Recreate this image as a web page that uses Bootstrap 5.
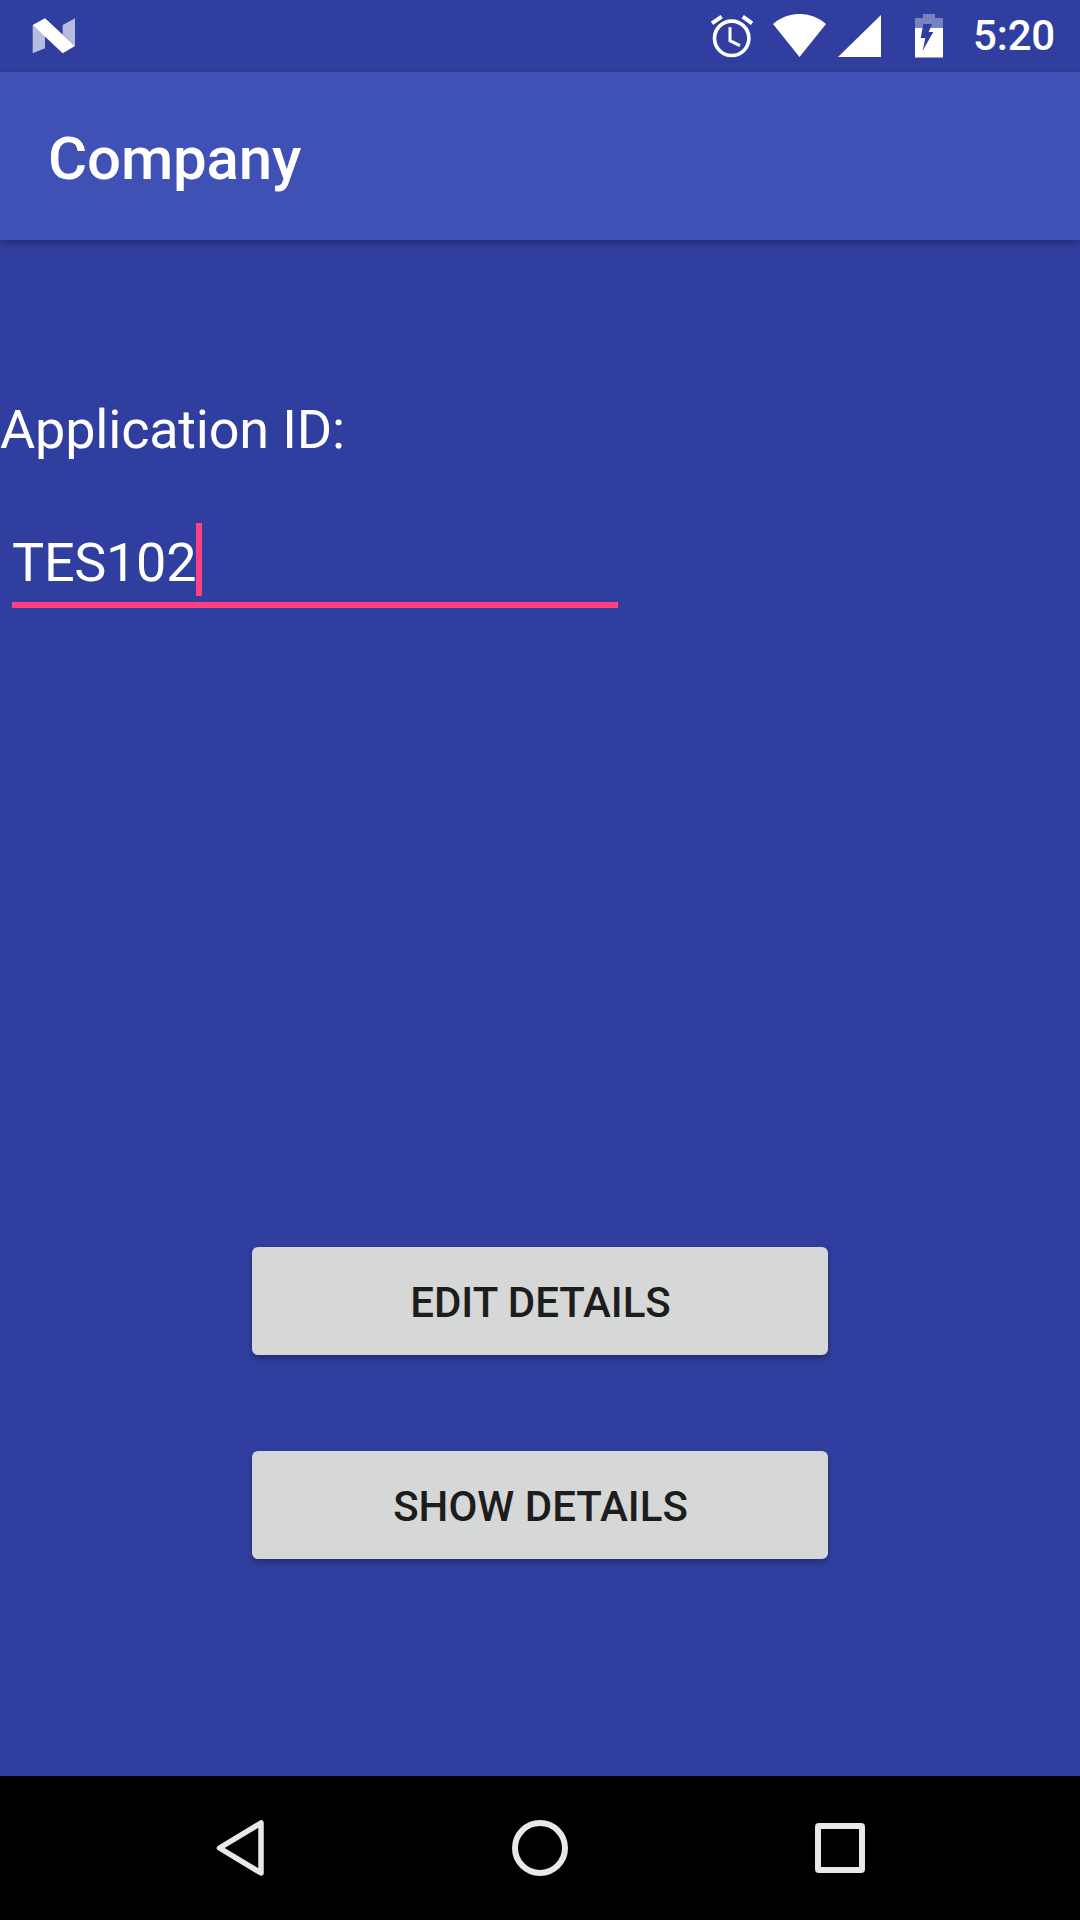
<!DOCTYPE html>
<html lang="en">
<head>
  <meta charset="UTF-8" />
  <meta name="viewport" content="width=device-width, initial-scale=1.0"/>
  <title>Company</title>
  <link href="https://cdn.jsdelivr.net/npm/bootstrap@5.3.2/dist/css/bootstrap.min.css" rel="stylesheet">
  <style>
    body {
      background-color: #303f9f;
      font-family: Roboto, "Liberation Sans", sans-serif;
      color: #fff;
    }
    .phone-screen {
      width: 1080px;
      height: 1920px;
    }
    .status-bar {
      height: 72px;
      padding: 0 25px 0 32px;
    }
    .status-time {
      font-size: 42px;
      font-weight: 500;
      line-height: 44px;
      margin-left: 30px;
      letter-spacing: -.2px;
    }
    .app-bar {
      height: 168px;
      padding: 5px 0 0 48px;
      background-color: #3f51b5;
      box-shadow: 0 3px 8px rgba(0, 0, 0, .3);
    }
    .app-title {
      font-size: 60px;
      font-weight: 500;
      line-height: 70px;
      letter-spacing: -.15px;
    }
    .content-area {
      padding-top: 158px;
      padding-bottom: 217px;
    }
    .field-label {
      font-size: 54px;
      line-height: 64px;
      letter-spacing: -.2px;
    }
    .id-field {
      width: 606px;
      height: 85px;
      margin: 61px 0 0 12px;
      border-bottom: 6px solid #ff4081;
      font-size: 54px;
      line-height: 64px;
      letter-spacing: -.3px;
    }
    .id-value {
      padding-top: 8px;
    }
    .id-caret {
      width: 6px;
      height: 73px;
      background-color: #ff4081;
    }
    .action-btn {
      width: 576px;
      height: 108px;
      padding: 2px 0 0 1px;
      border: 0;
      border-radius: 6px;
      background-color: #d6d7d7;
      color: #1d1d1d;
      font-size: 42px;
      font-weight: 500;
      box-shadow: 0 4px 7px rgba(0, 0, 0, .28);
    }
    .action-gap {
      gap: 96px;
    }
    .nav-bar {
      height: 144px;
      padding-left: 216px;
      background-color: #000;
    }
    .nav-home {
      margin-left: 248px;
    }
    .nav-recent {
      margin-left: 247px;
    }
    .status-gap-wifi { margin-left: 20px; }
    .status-gap-signal { margin-left: 11px; }
    .status-gap-battery { margin-left: 34px; }
  </style>
</head>
<body>
  <div class="phone-screen d-flex flex-column">
    <div class="status-bar d-flex align-items-center justify-content-between">
      <svg width="44" height="36" viewBox="0 0 44 36">
        <polygon points="0.7,7 13,0.3 43,28 30.7,35.3" fill="#fff"/>
        <polygon points="0.7,7 0.7,35.3 13,30.3 13,18" fill="#fff" opacity=".65"/>
        <polygon points="30.7,7 43,0.3 43,28 30.7,16.3" fill="#fff" opacity=".65"/>
      </svg>
      <div class="d-flex align-items-center">
        <svg width="42" height="44" viewBox="0 0 42 44" fill="none" stroke="#fff">
          <circle cx="20.7" cy="24.3" r="17.2" stroke-width="3.6"/>
          <path d="M1 9.3L10.7 2.7M31.7 2.7L41 9.3" stroke-width="4"/>
          <path d="M19 13.3V26.7L29 31.7" stroke-width="3"/>
        </svg>
        <svg class="status-gap-wifi" width="54" height="44" viewBox="0 0 54 44">
          <path d="M0 10A40 40 0 0 1 53 10L26.5 43Z" fill="#fff"/>
        </svg>
        <svg class="status-gap-signal" width="43" height="44" viewBox="0 0 43 44">
          <path d="M0 43L43 1V43Z" fill="#fff"/>
        </svg>
        <svg class="status-gap-battery" width="28" height="44" viewBox="0 0 28 44">
          <path d="M8 0H20V4H28V14H0V4H8Z" fill="#fff" opacity=".35"/>
          <path d="M0 14H28V43.5H0Z" fill="#fff"/>
          <path d="M8.3 10H17L13.7 18H18.3L7.7 36.7L10.3 24H5.7Z" fill="#303f9f"/>
        </svg>
        <span class="status-time">5:20</span>
      </div>
    </div>

    <div class="app-bar d-flex align-items-center">
      <span class="app-title">Company</span>
    </div>

    <div class="content-area flex-grow-1 d-flex flex-column">
      <div class="field-label">Application ID:</div>
      <div class="id-field d-flex align-items-start">
        <span class="id-value">TES102</span>
        <span class="id-caret"></span>
      </div>
      <div class="action-gap mt-auto d-flex flex-column align-items-center">
        <button type="button" class="btn action-btn">EDIT DETAILS</button>
        <button type="button" class="btn action-btn">SHOW DETAILS</button>
      </div>
    </div>

    <div class="nav-bar d-flex align-items-center">
      <svg width="48" height="56" viewBox="0 0 48 56" fill="none" stroke="#e8e8e8" stroke-width="5.5" stroke-linejoin="round">
        <polygon points="3.5,28 45,3 45,53"/>
      </svg>
      <svg class="nav-home" width="56" height="56" viewBox="0 0 56 56" fill="none" stroke="#e8e8e8" stroke-width="6">
        <circle cx="28" cy="28" r="25"/>
      </svg>
      <svg class="nav-recent" width="50" height="50" viewBox="0 0 50 50" fill="none" stroke="#e8e8e8" stroke-width="6">
        <rect x="3" y="3" width="44" height="44" rx="1"/>
      </svg>
    </div>
  </div>

  <script src="https://cdn.jsdelivr.net/npm/bootstrap@5.3.2/dist/js/bootstrap.bundle.min.js"></script>
</body>
</html>
